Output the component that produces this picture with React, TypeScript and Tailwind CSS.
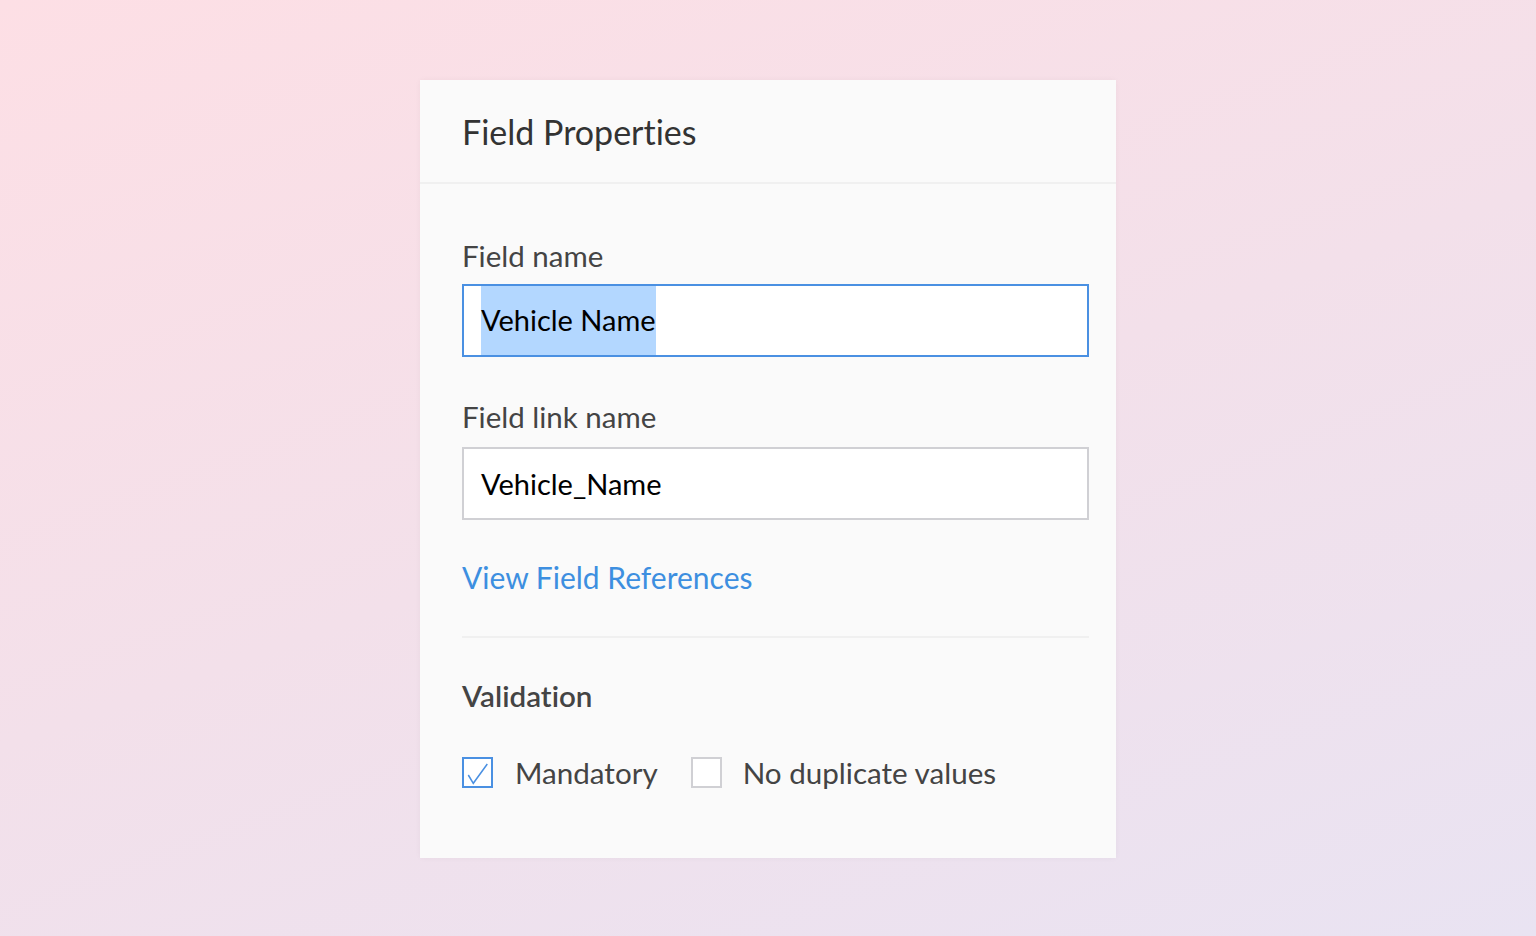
export default function App() {
    return (
        <div className="w-full h-[936px] flex justify-center pt-20 bg-[linear-gradient(160deg,#fddfe5_0%,#f3e0ea_50%,#e9e3f2_100%)] font-['Lato','Noto_Sans',sans-serif] [font-variant-ligatures:none]">
            <div className="w-[696px] h-[778px] bg-[#fafafa] shadow-[0_0_6px_rgba(0,0,0,0.04)] flex flex-col">
                <header className="h-[104px] flex items-center px-[42px] pt-[2px] border-b-2 border-[#f0f0f0]">
                    <h1 className="text-[34px] text-[#333] leading-none">Field Properties</h1>
                </header>
                <main className="flex flex-col px-[42px] pt-[57px]">
                    <label className="text-[29.5px] text-[#444] leading-none">Field name</label>
                    <div className="mt-[13px] h-[73px] w-[627px] border-2 border-[#4a90e2] bg-white flex items-stretch pl-[17px]">
                        <span className="flex items-center bg-[#b3d7ff] text-[29px] text-black">Vehicle Name</span>
                    </div>
                    <label className="mt-[45px] text-[29.5px] text-[#444] leading-none">Field link name</label>
                    <div className="mt-[16px] h-[73px] w-[627px] border-2 border-[#d0d0d4] bg-white flex items-center pl-[17px]">
                        <span className="text-[29px] text-black">Vehicle_Name</span>
                    </div>
                    <a className="mt-[42px] text-[30px] text-[#3d8fe0] leading-none">View Field References</a>
                    <div className="mt-[44px] h-[2px] w-[627px] bg-[#f0f0f0]" />
                    <h2 className="mt-[43px] text-[29.6px] font-semibold text-[#444] leading-none">Validation</h2>
                    <div className="mt-[40px] flex items-center">
                        <span className="relative w-[31px] h-[31px] border-2 border-[#4a90e2] bg-white">
                            <svg className="absolute -left-[2px] -top-[2px]" width="31" height="31" viewBox="0 0 31 31" fill="none">
                                <path d="M6.3 18l5 8.3L25.3 7" stroke="#4a90e2" strokeWidth="1.5" />
                            </svg>
                        </span>
                        <span className="ml-[22px] text-[29.6px] text-[#444]">Mandatory</span>
                        <span className="ml-[33px] w-[31px] h-[31px] border-2 border-[#d0d0d4] bg-white" />
                        <span className="ml-[21px] text-[29.6px] text-[#444]">No duplicate values</span>
                    </div>
                </main>
            </div>
        </div>
    )
}
